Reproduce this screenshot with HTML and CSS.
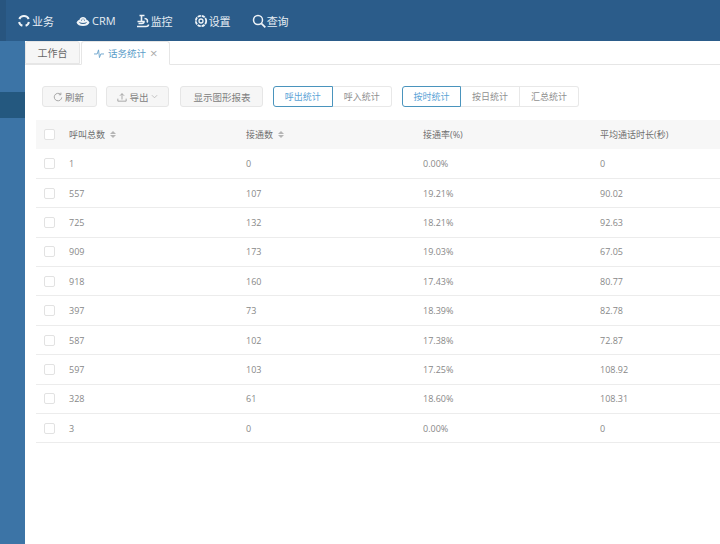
FILE: index.html
```html
<!DOCTYPE html>
<html lang="zh-CN">
<head>
    <meta charset="UTF-8">
    <title>话务统计</title>
    <link rel="stylesheet" href="styles.css">
</head>
<body>
    <div class="topbar">
        <div class="nav-item">
            <svg class="nav-icon" viewBox="0 0 14 14"><path d="M2.300 5A5 5 0 0 1 7 2a5 5 0 0 1 4.700 3M11.900 8a5 5 0 0 1-3.300 3.800M5.400 11.800A5 5 0 0 1 2.100 8" fill="none" stroke="#eef3f7" stroke-width="2"/></svg>
            <span>业务</span>
        </div>
        <div class="nav-item nav-item-crm">
            <svg class="nav-icon nav-icon-wide" viewBox="0 0 16 14"><path d="M1.500 8.500c1.200-2 2-2.500 3-2.700.4-1.800 1.800-2.800 3.500-2.800s3.100 1 3.500 2.800c1 .2 1.800.7 3 2.700-.8 2.400-3.400 3.500-6.500 3.500S2.300 10.900 1.500 8.500z" fill="#eef3f7"/><path d="M4.500 8.500c1 1.300 6 1.300 7 0M6 6.200h.8M9.200 6.200h.8M7.600 5h.8" fill="none" stroke="#2b5c8a" stroke-width="1"/></svg>
            <span>CRM</span>
        </div>
        <div class="nav-item">
            <svg class="nav-icon" viewBox="0 0 14 14"><path d="M3.500 1.500h5M5.500 1.500v6M8.500 4.500c3 0 3.500 2.500 2.500 4M1.500 7.500h6.500c0 1.200-.8 2-2 2H2.500M1 12.500h9c1.500 0 2.500-1 2.500-2" fill="none" stroke="#eef3f7" stroke-width="1.600"/></svg>
            <span>监控</span>
        </div>
        <div class="nav-item">
            <svg class="nav-icon" viewBox="0 0 14 14"><circle cx="7" cy="7" r="5.200" fill="none" stroke="#eef3f7" stroke-width="1.800" stroke-dasharray="3.300 .8"/><circle cx="7" cy="7" r="2" fill="none" stroke="#eef3f7" stroke-width="1.300"/></svg>
            <span>设置</span>
        </div>
        <div class="nav-item">
            <svg class="nav-icon" viewBox="0 0 14 14"><circle cx="6" cy="6" r="4.500" fill="none" stroke="#eef3f7" stroke-width="1.500"/><path d="M9.300 9.300l4 4" stroke="#eef3f7" stroke-width="1.800"/></svg>
            <span>查询</span>
        </div>
    </div>

    <div class="layout">
        <div class="sidebar">
            <div class="side-active"></div>
        </div>

        <div class="main">
            <div class="tabs">
                <div class="tab">工作台</div>
                <div class="tab tab-active">
                    <svg class="tab-icon" viewBox="0 0 11 12"><path d="M0 6.500h3.500L5 2l1 8.500L7.500 6.500H11" fill="none" stroke="#6aa3cc" stroke-width="1"/></svg>
                    <span>话务统计</span>
                    <span class="tab-close">×</span>
                </div>
            </div>

            <div class="toolbar">
                <button class="btn btn-refresh">
                    <svg class="btn-icon" viewBox="0 0 12 12"><path d="M10.500 6.500A4.500 4.500 0 1 1 9 2.700M9.500 .8v2.500H7" fill="none" stroke="#999" stroke-width="1"/></svg>
                    刷新
                </button>
                <button class="btn btn-export">
                    <svg class="btn-icon" viewBox="0 0 12 12"><path d="M6 9V2M3.500 4.500L6 2l2.500 2.500M1 8v3h10V8" fill="none" stroke="#999" stroke-width="1"/></svg>
                    导出<svg class="btn-caret" viewBox="0 0 8 8"><path d="M1 2.500l3 3 3-3" fill="none" stroke="#bbb" stroke-width="1"/></svg>
                </button>
                <button class="btn btn-chart">显示图形报表</button>
                <div class="btn-group">
                    <div class="seg seg-wide seg-on">呼出统计</div>
                    <div class="seg seg-wide">呼入统计</div>
                </div>
                <div class="btn-group">
                    <div class="seg seg-on">按时统计</div>
                    <div class="seg">按日统计</div>
                    <div class="seg">汇总统计</div>
                </div>
            </div>

            <table class="data-table">
                <thead>
                    <tr>
                        <th class="col-check"><span class="checkbox"></span></th>
                        <th class="col-total">呼叫总数 <span class="sort"><i class="up"></i><i class="down"></i></span></th>
                        <th class="col-conn">接通数 <span class="sort"><i class="up"></i><i class="down"></i></span></th>
                        <th class="col-rate">接通率(%)</th>
                        <th>平均通话时长(秒)</th>
                    </tr>
                </thead>
                <tbody>
                    <tr><td><span class="checkbox"></span></td><td>1</td><td>0</td><td>0.00%</td><td>0</td></tr>
                    <tr><td><span class="checkbox"></span></td><td>557</td><td>107</td><td>19.21%</td><td>90.02</td></tr>
                    <tr><td><span class="checkbox"></span></td><td>725</td><td>132</td><td>18.21%</td><td>92.63</td></tr>
                    <tr><td><span class="checkbox"></span></td><td>909</td><td>173</td><td>19.03%</td><td>67.05</td></tr>
                    <tr><td><span class="checkbox"></span></td><td>918</td><td>160</td><td>17.43%</td><td>80.77</td></tr>
                    <tr><td><span class="checkbox"></span></td><td>397</td><td>73</td><td>18.39%</td><td>82.78</td></tr>
                    <tr><td><span class="checkbox"></span></td><td>587</td><td>102</td><td>17.38%</td><td>72.87</td></tr>
                    <tr><td><span class="checkbox"></span></td><td>597</td><td>103</td><td>17.25%</td><td>108.92</td></tr>
                    <tr><td><span class="checkbox"></span></td><td>328</td><td>61</td><td>18.60%</td><td>108.31</td></tr>
                    <tr><td><span class="checkbox"></span></td><td>3</td><td>0</td><td>0.00%</td><td>0</td></tr>
                </tbody>
            </table>
        </div>
    </div>
</body>
</html>
```

FILE: styles.css
```css
* {
    margin: 0;
    padding: 0;
    box-sizing: border-box;
}

html, body {
    height: 544px;
    overflow: hidden;
}

body {
    font-family: "Open Sans", "Noto Sans CJK SC", sans-serif;
    font-size: 9px;
    color: #888;
    background: #fff;
}

.topbar {
    height: 41px;
    background: linear-gradient(90deg, #28557f 6px, #2b5c8a 6px);
    display: flex;
    align-items: center;
    padding-left: 17px;
    color: #e6edf3;
    font-size: 11px;
}

.nav-item {
    display: flex;
    align-items: center;
    gap: 1px;
    margin-right: 21px;
}

.nav-item-crm {
    margin-right: 20px;
}

.nav-icon {
    width: 14px;
    height: 14px;
}

.nav-icon-wide {
    width: 16px;
}

.layout {
    display: flex;
    height: 503px;
}

.sidebar {
    width: 25px;
    background: #3c74a6;
    padding-top: 51px;
}

.side-active {
    height: 26px;
    background: #24587f;
}

.main {
    flex: 1;
    min-width: 0;
    background: #fff;
}

.tabs {
    height: 24px;
    display: flex;
    align-items: flex-end;
    gap: 1px;
    border-bottom: 1px solid #e6e6e6;
    background: #fff;
}

.tab {
    height: 23px;
    width: 55px;
    display: flex;
    align-items: center;
    justify-content: center;
    background: #f6f6f6;
    border: 1px solid #e6e6e6;
    border-radius: 3px 3px 0 0;
    color: #666;
    font-size: 10px;
}

.tab-active {
    width: 89px;
    height: 24px;
    margin-bottom: -1px;
    padding-left: 12px;
    justify-content: flex-start;
    background: #fff;
    border-bottom-color: #fff;
    color: #5a9cc8;
    font-size: 9.500px;
    gap: 4px;
}

.tab-icon {
    width: 10px;
    height: 11px;
}

.tab-close {
    color: #aaa;
    font-size: 13px;
    line-height: 1;
}

.toolbar {
    display: flex;
    align-items: flex-start;
    padding: 21px 0 0 17px;
    height: 55px;
}

.btn {
    height: 21px;
    display: flex;
    align-items: center;
    justify-content: center;
    gap: 2px;
    background: #f6f6f6;
    border: 1px solid #e6e6e6;
    border-radius: 3px;
    color: #808080;
    font-family: inherit;
    font-size: 9.500px;
}

.btn-icon {
    width: 10px;
    height: 10px;
}

.btn-caret {
    width: 7px;
    height: 7px;
}

.btn-refresh {
    width: 55px;
    margin-right: 9px;
    padding-right: 2px;
}

.btn-export {
    width: 63px;
    margin-right: 11px;
}

.btn-chart {
    width: 83px;
    margin-right: 10px;
    padding-left: 1px;
}

.btn-group {
    display: flex;
    margin-right: 10px;
}

.seg {
    height: 21px;
    width: 59px;
    display: flex;
    align-items: center;
    justify-content: center;
    border: 1px solid #e8e8e8;
    border-left: none;
    color: #909090;
}

.seg:first-child {
    border-left: 1px solid #e8e8e8;
    border-radius: 3px 0 0 3px;
}

.seg:last-child {
    border-radius: 0 3px 3px 0;
}

.seg-wide {
    width: 59.500px;
}

.seg.seg-on {
    border: 1px solid #4a94bd;
    color: #5aa3d6;
}

.data-table {
    width: 695px;
    margin-left: 11px;
    border-collapse: collapse;
    table-layout: fixed;
}

.data-table th {
    height: 29px;
    background: #f7f7f7;
    font-weight: normal;
    text-align: left;
    color: #707070;
    white-space: nowrap;
}

.data-table td {
    height: 29.400px;
    border-bottom: 1px solid #ececec;
}

.col-check {
    width: 33px;
}

.col-total,
.col-conn,
.col-rate {
    width: 177px;
}

.checkbox {
    display: block;
    width: 11px;
    height: 11px;
    margin-left: 8px;
    background: #fff;
    border: 1px solid #e2e2e2;
    border-radius: 2px;
}

.sort {
    display: inline-block;
    width: 6px;
    height: 8px;
    margin-left: 3px;
    vertical-align: -1px;
}

.sort i {
    display: block;
    width: 0;
    height: 0;
    border-left: 3px solid transparent;
    border-right: 3px solid transparent;
}

.sort .up {
    border-bottom: 3px solid #b5b5b5;
    margin-bottom: 1px;
}

.sort .down {
    border-top: 3px solid #b5b5b5;
}
```
